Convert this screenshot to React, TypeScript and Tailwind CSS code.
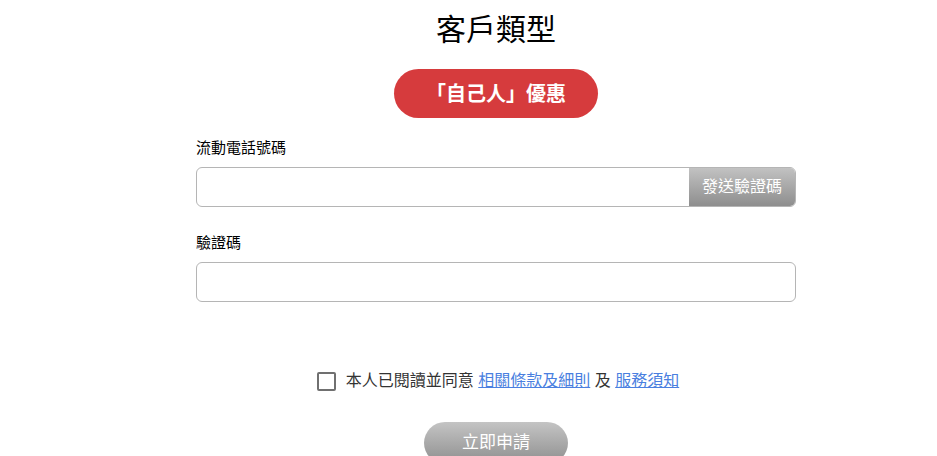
import { useState } from 'react';

export default function App() {
  const [agreed, setAgreed] = useState(false);

  return (
    <div className="min-h-screen bg-white pl-[55px] font-['Liberation_Sans','Noto_Sans_CJK_TC',sans-serif] text-[#222]">
      <div className="mx-auto flex w-[600px] flex-col items-center">
        <h1 className="mt-[10px] text-[30px] leading-[40px] text-black">客戶類型</h1>

        <button className="mt-[19px] h-[49px] w-[204px] rounded-full bg-[#d63b3d] text-[20px] font-bold text-white">
          「自己人」優惠
        </button>

        {/* Mobile number */}
        <div className="mt-[19px] w-full">
          <label className="block text-[15px] leading-[22px] text-black">流動電話號碼</label>
          <div className="mt-[8px] flex h-[40px] overflow-hidden rounded-[6px] border border-[#b5b5b5]">
            <input className="min-w-0 flex-1 px-3 text-[15px] outline-none" />
            <button className="w-[106px] bg-gradient-to-b from-[#c2c2c2] to-[#8e8e8e] text-[16px] text-white">
              發送驗證碼
            </button>
          </div>
        </div>

        {/* Verification code */}
        <div className="mt-[25px] w-full">
          <label className="block text-[15px] leading-[22px] text-black">驗證碼</label>
          <input className="mt-[8px] block h-[40px] w-full rounded-[6px] border border-[#b5b5b5] px-3 text-[15px] outline-none" />
        </div>

        {/* Terms */}
        <div className="mt-[67px] flex items-center gap-[10px] pl-[4px] text-[16px] text-[#333]">
          <button
            onClick={() => setAgreed(!agreed)}
            className="h-[19px] w-[19px] rounded-[2px] border-2 border-[#707070] bg-white"
            aria-label="agree"
          />
          <p>
            本人已閱讀並同意{' '}
            <a href="#" className="text-[#4a7fe0] underline">相關條款及細則</a>{' '}
            及{' '}
            <a href="#" className="text-[#4a7fe0] underline">服務須知</a>
          </p>
        </div>

        <button className="mt-[29px] h-[42px] w-[144px] rounded-full bg-gradient-to-b from-[#c4c4c4] to-[#8f8f8f] text-[17px] text-white">
          立即申請
        </button>
      </div>
    </div>
  );
}
